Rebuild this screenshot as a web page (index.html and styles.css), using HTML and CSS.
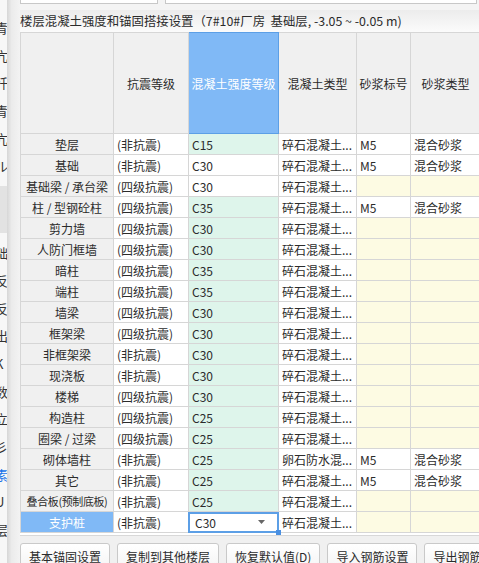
FILE: index.html
```html
<!DOCTYPE html>
<html>
<head lang="zh">
  <meta charset="UTF-8">
  <title>楼层混凝土强度和锚固搭接设置</title>
  <link rel="stylesheet" href="styles.css">
</head>
<body>
<div class="app">
  <div class="side">
    <div class="side-list">
      <div class="side-item">青</div>
      <div class="side-item">亢</div>
      <div class="side-item">忏</div>
      <div class="side-item">青</div>
      <div class="side-item">亢</div>
      <div class="side-item">ル</div>
      <div class="side-item side-cur"></div>
      <div class="side-item">础</div>
      <div class="side-item">反</div>
      <div class="side-item">反</div>
      <div class="side-item">出</div>
      <div class="side-item">K</div>
      <div class="side-item">数</div>
      <div class="side-item">立</div>
      <div class="side-item">彡</div>
      <div class="side-item side-blue">素</div>
      <div class="side-item">U</div>
      <div class="side-item">层</div>
    </div>
    <div class="side-bar"></div>
  </div>

  <div class="main">
    <div class="top-boxes">
      <div class="box box-a"></div>
      <div class="box box-b"></div>
    </div>
    <div class="title">楼层混凝土强度和锚固搭接设置（7#10#厂房&nbsp; 基础层, -3.05 ~ -0.05 m)</div>

    <div class="grid-wrap">
      <table class="grid">
        <colgroup>
          <col class="c0"><col class="c1"><col class="c2"><col class="c3"><col class="c4"><col class="c5">
        </colgroup>
        <tr class="head">
          <th></th>
          <th>抗震等级</th>
          <th class="head-cur">混凝土强度等级</th>
          <th>混凝土类型</th>
          <th>砂浆标号</th>
          <th>砂浆类型</th>
        </tr>
        <tr><td class="lab">垫层</td><td>(非抗震)</td><td class="grn">C15</td><td>碎石混凝土...</td><td>M5</td><td>混合砂浆</td></tr>
        <tr><td class="lab">基础</td><td>(非抗震)</td><td>C30</td><td>碎石混凝土...</td><td>M5</td><td>混合砂浆</td></tr>
        <tr><td class="lab">基础梁 / 承台梁</td><td>(四级抗震)</td><td>C30</td><td>碎石混凝土...</td><td class="yel"></td><td class="yel"></td></tr>
        <tr><td class="lab">柱 / 型钢砼柱</td><td>(四级抗震)</td><td class="grn">C35</td><td>碎石混凝土...</td><td>M5</td><td>混合砂浆</td></tr>
        <tr><td class="lab">剪力墙</td><td>(四级抗震)</td><td class="grn">C30</td><td>碎石混凝土...</td><td class="yel"></td><td class="yel"></td></tr>
        <tr><td class="lab">人防门框墙</td><td>(四级抗震)</td><td class="grn">C30</td><td>碎石混凝土...</td><td class="yel"></td><td class="yel"></td></tr>
        <tr><td class="lab">暗柱</td><td>(四级抗震)</td><td class="grn">C35</td><td>碎石混凝土...</td><td class="yel"></td><td class="yel"></td></tr>
        <tr><td class="lab">端柱</td><td>(四级抗震)</td><td class="grn">C35</td><td>碎石混凝土...</td><td class="yel"></td><td class="yel"></td></tr>
        <tr><td class="lab">墙梁</td><td>(四级抗震)</td><td class="grn">C30</td><td>碎石混凝土...</td><td class="yel"></td><td class="yel"></td></tr>
        <tr><td class="lab">框架梁</td><td>(四级抗震)</td><td class="grn">C30</td><td>碎石混凝土...</td><td class="yel"></td><td class="yel"></td></tr>
        <tr><td class="lab">非框架梁</td><td>(非抗震)</td><td class="grn">C30</td><td>碎石混凝土...</td><td class="yel"></td><td class="yel"></td></tr>
        <tr><td class="lab">现浇板</td><td>(非抗震)</td><td class="grn">C30</td><td>碎石混凝土...</td><td class="yel"></td><td class="yel"></td></tr>
        <tr><td class="lab">楼梯</td><td>(四级抗震)</td><td class="grn">C30</td><td>碎石混凝土...</td><td class="yel"></td><td class="yel"></td></tr>
        <tr><td class="lab">构造柱</td><td>(四级抗震)</td><td class="grn">C25</td><td>碎石混凝土...</td><td class="yel"></td><td class="yel"></td></tr>
        <tr><td class="lab">圈梁 / 过梁</td><td>(四级抗震)</td><td class="grn">C25</td><td>碎石混凝土...</td><td class="yel"></td><td class="yel"></td></tr>
        <tr><td class="lab">砌体墙柱</td><td>(非抗震)</td><td class="grn">C25</td><td>卵石防水混...</td><td>M5</td><td>混合砂浆</td></tr>
        <tr><td class="lab">其它</td><td>(非抗震)</td><td class="grn">C25</td><td>碎石混凝土...</td><td>M5</td><td>混合砂浆</td></tr>
        <tr><td class="lab tight">叠合板(预制底板)</td><td>(非抗震)</td><td class="grn">C25</td><td>碎石混凝土...</td><td class="yel"></td><td class="yel"></td></tr>
        <tr>
          <td class="lab lab-cur">支护桩</td>
          <td>(非抗震)</td>
          <td class="edit">
            <div class="combo">
              <span>C30</span>
              <svg class="combo-arrow" width="7" height="4" viewBox="0 0 7 4"><path d="M0 0h7L3.5 4z" fill="#666"/></svg>
              <span class="fill-handle"></span>
            </div>
          </td>
          <td>碎石混凝土...</td>
          <td class="yel"></td>
          <td class="yel"></td>
        </tr>
      </table>
    </div>

    <div class="buttons">
      <a class="btn" href="javascript:void(0);">基本锚固设置</a>
      <a class="btn" href="javascript:void(0);">复制到其他楼层</a>
      <a class="btn" href="javascript:void(0);">恢复默认值(D)</a>
      <a class="btn" href="javascript:void(0);">导入钢筋设置</a>
      <a class="btn" href="javascript:void(0);">导出钢筋设置</a>
    </div>
  </div>
</div>
</body>
</html>
```

FILE: styles.css
```css
html, body {
  margin: 0px;
  padding: 0px;
  width: 479px;
  height: 563px;
  overflow: hidden;
  background: #f0f0f0;
  font-family: "Noto Sans CJK SC", "Noto Sans", sans-serif;
  font-size: 12px;
  color: #2b2b2b;
}

.app {
  display: flex;
  height: 563px;
}

/* 左侧被遮住的树 */
.side {
  width: 20px;
  display: flex;
  flex-shrink: 0;
}

.side-list {
  width: 7px;
  overflow: hidden;
  background: #f7f7f7;
  padding-top: 14px;
}

.side-item {
  height: 27.7px;
  line-height: 27.7px;
  font-size: 13px;
  text-indent: -5px;
  white-space: nowrap;
  color: #333333;
}

.side-cur {
  height: 47px;
  margin: 6px 0px;
  background: #e2e2e2;
}

.side-blue {
  color: #1a73e8;
}

.side-bar {
  flex: 1;
  background: linear-gradient(to right, #d6d6d6, #ebebeb 35%, #f3f3f3);
}

.main {
  flex: 1;
  overflow: hidden;
  display: flex;
  flex-direction: column;
}

.top-boxes {
  display: flex;
  gap: 7px;
  height: 4px;
  padding-bottom: 6px;
  background: #f4f4f4;
}

.box {
  background: #ffffff;
  border: #c8c8c8 solid 1px;
  border-top: none;
  height: 3px;
}

.box-a {
  width: 136px;
}

.box-b {
  width: 310px;
}

.title {
  height: 23px;
  line-height: 22px;
  white-space: nowrap;
  font-size: 12.4px;
  color: #2b2b2b;
  background: linear-gradient(#ececec, #fbfbfb);
}

.grid-wrap {
  width: 460px;
  background: #ffffff;
  padding-bottom: 2px;
  border-bottom: #d8d8d8 solid 1px;
}

.grid {
  border-collapse: collapse;
  table-layout: fixed;
  width: 460px;
}

.c0 { width: 93px; }
.c1 { width: 75px; }
.c2 { width: 90px; }
.c3 { width: 78px; }
.c4 { width: 54px; }
.c5 { width: 70px; }

.grid th,
.grid td {
  border: #d6d6d6 solid 1px;
  padding: 0px 0px 0px 3px;
  white-space: nowrap;
  overflow: hidden;
  text-align: left;
  font-weight: normal;
}

.grid tr {
  height: 21px;
}

.grid tr.head {
  height: 101px;
}

.grid th {
  background: #f0f0f0;
  text-align: center;
  padding: 0px;
  color: #2b2b2b;
}

.grid th.head-cur {
  background: #80b9f6;
  border-color: #5c9fe6;
  color: #ffffff;
}

.grid td.lab {
  background: #f0f0f0;
  text-align: center;
  padding: 0px;
}

.grid td.tight {
  font-size: 11px;
  letter-spacing: -0.4px;
}

.grid td.lab-cur {
  background: #80b9f6;
  color: #ffffff;
}

.grid td.grn {
  background: #def5eb;
}

.grid td.yel {
  background: #fdfbe3;
}

.grid td.edit {
  padding: 0px;
  overflow: visible;
}

.combo {
  position: relative;
  display: flex;
  align-items: center;
  justify-content: space-between;
  height: 21px;
  margin: -1px;
  padding: 0px 12px 0px 5px;
  border: #5c9fe6 solid 2px;
  box-sizing: border-box;
  background: #ffffff;
}

.combo-arrow {
  display: block;
}

.fill-handle {
  position: absolute;
  right: -4px;
  bottom: -4px;
  width: 5px;
  height: 5px;
  background: #4a90e2;
}

.buttons {
  display: flex;
  gap: 7px;
  margin-top: 7px;
  white-space: nowrap;
}

.btn {
  display: block;
  flex-shrink: 0;
  height: 26px;
  line-height: 26px;
  padding: 0px 8px;
  border: #c9c9c9 solid 1px;
  border-radius: 3px;
  background: linear-gradient(#ffffff, #f4f4f4);
  color: #2b2b2b;
  text-decoration: none;
  font-size: 12px;
}
```
